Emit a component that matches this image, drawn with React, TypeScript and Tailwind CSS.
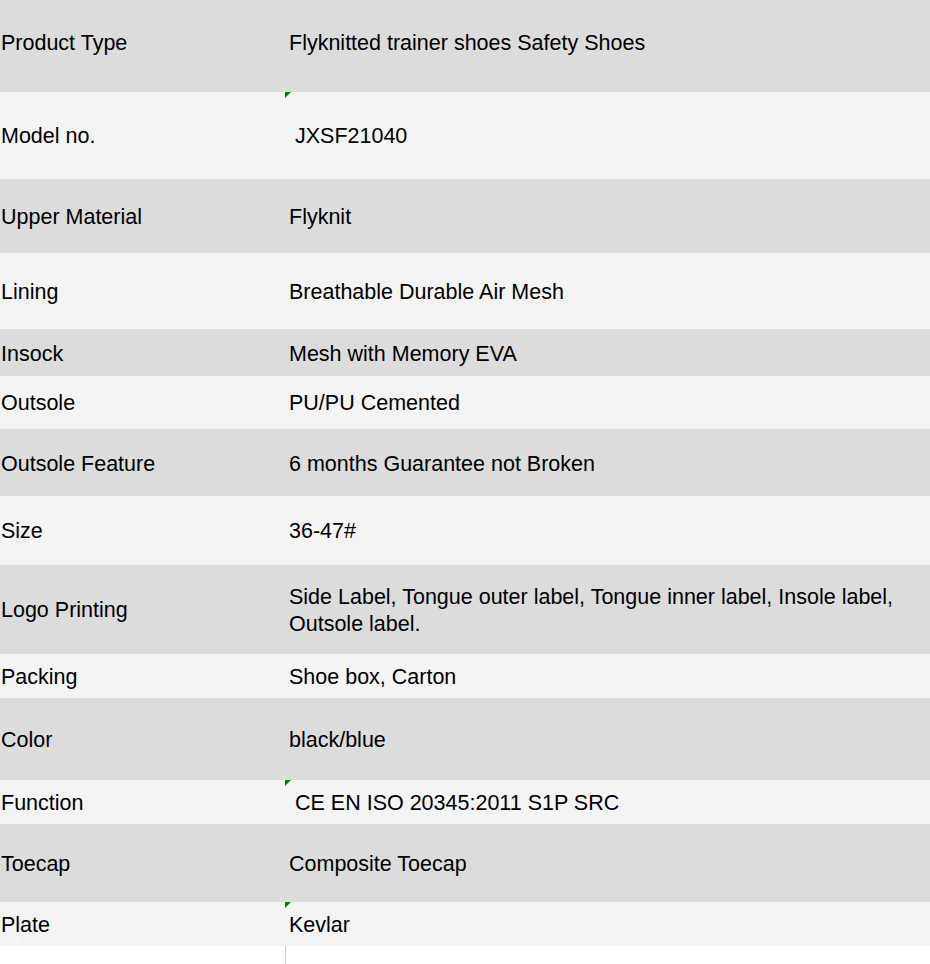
import React from "react";

type Row = { label: string; value: string; h: number; marker?: boolean; indent?: boolean; pad?: string };

const rows: Row[] = [
  { label: "Product Type", value: "Flyknitted trainer shoes Safety Shoes", h: 92, pad: "pb-[6px]" },
  { label: "Model no.", value: "JXSF21040", h: 87, marker: true, indent: true },
  { label: "Upper Material", value: "Flyknit", h: 74 },
  { label: "Lining", value: "Breathable Durable Air Mesh", h: 76 },
  { label: "Insock", value: "Mesh with Memory EVA", h: 47, pad: "pt-[4px]" },
  { label: "Outsole", value: "PU/PU Cemented", h: 53 },
  { label: "Outsole Feature", value: "6 months Guarantee not Broken", h: 67, pad: "pt-[3px]" },
  { label: "Size", value: "36-47#", h: 69 },
  { label: "Logo Printing", value: "Side Label, Tongue outer label, Tongue inner label, Insole label, Outsole label.", h: 89 },
  { label: "Packing", value: "Shoe box, Carton", h: 44 },
  { label: "Color", value: "black/blue", h: 82 },
  { label: "Function", value: "CE EN ISO 20345:2011 S1P SRC", h: 44, marker: true, indent: true },
  { label: "Toecap", value: "Composite Toecap", h: 78 },
  { label: "Plate", value: "Kevlar", h: 44, marker: true },
];

export default function App() {
  return (
    <div
      className="w-[930px] h-[964px] bg-white text-black text-[21.5px] leading-[27px] overflow-hidden"
      style={{ fontFamily: '"Liberation Sans", Arial, sans-serif' }}
    >
      {rows.map((r, i) => (
        <div
          key={r.label}
          className={`flex ${r.pad ?? "pt-[2px]"} ${i % 2 === 0 ? "bg-[#dcdcdc]" : "bg-[#f4f4f4]"}`}
          style={{ height: r.h }}
        >
          <div className="w-[285px] shrink-0 flex items-center pl-[1px]">{r.label}</div>
          <div className="relative flex-1 flex items-center pl-[4px] pr-[20px]">
            {r.marker && (
              <span className="absolute left-0 top-[-2px] w-0 h-0 border-t-[6px] border-t-[#0a7a0a] border-r-[6px] border-r-transparent" />
            )}
            <span>{r.indent ? "\u00a0" + r.value : r.value}</span>
          </div>
        </div>
      ))}
      <div className="flex h-[18px]">
        <div className="w-[285px] shrink-0" />
        <div className="flex-1 border-l border-l-[#c5cddc]" />
      </div>
    </div>
  );
}
